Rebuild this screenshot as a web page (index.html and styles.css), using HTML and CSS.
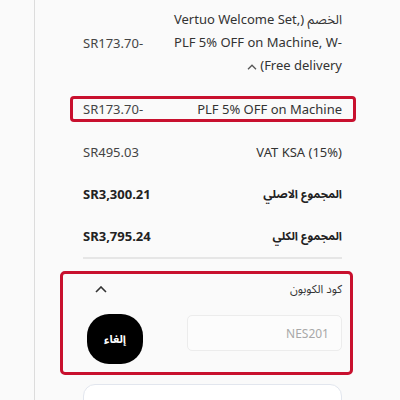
FILE: index.html
```html
<!DOCTYPE html>
<html lang="ar">

<head>
    <meta charset="UTF-8">
    <meta name="viewport" content="width=device-width, initial-scale=1.0">
    <title>ملخص الطلب</title>
    <link rel="stylesheet" href="styles.css">
</head>

<body>
    <div class="page">
        <div class="rail"></div>
        <div class="summary">
            <!-- الخصومات -->
            <div class="row row-first">
                <span class="amount">SR173.70-</span>
                <span class="label label-wrap" dir="rtl">الخصم (Vertuo Welcome Set, PLF 5% OFF on Machine, W-Free delivery)<svg class="mini-chevron" width="10" height="6" viewBox="0 0 10 6"><path d="M1 5.2 L5 1.2 L9 5.2" fill="none" stroke="#555" stroke-width="1.3"/></svg></span>
            </div>
            <div class="row row-marked">
                <div class="mark">
                    <span class="amount">SR173.70-</span>
                    <span class="label">PLF 5% OFF on Machine</span>
                </div>
            </div>
            <div class="row">
                <span class="amount">SR495.03</span>
                <span class="label">VAT KSA (15%)</span>
            </div>
            <div class="row row-bold">
                <span class="amount">SR3,300.21</span>
                <span class="label ar" dir="rtl">المجموع الاصلي</span>
            </div>
            <div class="row row-bold row-last">
                <span class="amount">SR3,795.24</span>
                <span class="label ar" dir="rtl">المجموع الكلي</span>
            </div>

            <!-- كود الكوبون -->
            <div class="coupon">
                <div class="coupon-head">
                    <svg class="chevron" width="12" height="7" viewBox="0 0 12 7"><path d="M1 6 L6 1 L11 6" fill="none" stroke="#333" stroke-width="1.6"/></svg>
                    <span class="coupon-title ar" dir="rtl">كود الكوبون</span>
                </div>
                <div class="coupon-body">
                    <button class="cancel-btn ar" dir="rtl">إلغاء</button>
                    <input class="coupon-input" type="text" value="NES201" readonly>
                </div>
            </div>

            <div class="next-box"></div>
        </div>
    </div>
</body>

</html>
```

FILE: styles.css
```css
* {
    margin: 0;
    padding: 0;
    box-sizing: border-box;
}

body {
    background-color: #fafafa;
    font-family: "Noto Sans", "Open Sans", "Noto Sans Arabic", "DejaVu Sans", sans-serif;
    font-size: 13px;
    color: #333;
}

.ar {
    font-size: 11.5px;
}

.page {
    display: flex;
    min-height: 100vh;
}

.rail {
    width: 35px;
    border-right: 1px solid #dcdcdc;
}

.summary {
    width: 259px;
    margin-left: 48px;
}

.row {
    display: flex;
    justify-content: space-between;
    align-items: center;
    padding: 10px 0;
    line-height: 22px;
}

.row-first {
    padding-top: 8px;
}

.label {
    text-align: right;
}

.label-wrap {
    width: 186px;
    line-height: 23px;
}

.amount {
    color: #444;
    white-space: nowrap;
}

.mini-chevron {
    margin: 0 3px 0 1px;
}

.row-marked {
    padding: 9px 0;
}

.mark {
    flex: 1;
    display: flex;
    justify-content: space-between;
    margin: 0 -14px 0 -13px;
    padding: 0 11px 0 10px;
    border: 3px solid #c8102e;
    border-radius: 4px;
    line-height: 20px;
}

.row-bold {
    font-weight: bold;
    color: #222;
}

.row-bold .amount {
    color: #222;
}

.row-last {
    border-bottom: 2px solid #e6e6e6;
}

.coupon {
    margin: 12px -11px 0 -23px;
    padding: 4px 8px 8px 24px;
    border: 3px solid #c8102e;
    border-radius: 5px;
}

.coupon-head {
    display: flex;
    justify-content: space-between;
    align-items: center;
    height: 22px;
}

.chevron {
    margin-left: 8px;
}

.coupon-title {
    color: #333;
}

.coupon-body {
    display: flex;
    justify-content: space-between;
    align-items: flex-start;
    margin-top: 14px;
}

.cancel-btn {
    width: 56px;
    height: 50px;
    border: none;
    border-radius: 22px;
    background: #000;
    color: #fff;
    font-family: inherit;
    font-weight: bold;
}

.coupon-input {
    width: 155px;
    height: 36px;
    margin-top: 1px;
    padding: 0 12px;
    border: 1px solid #ececec;
    border-radius: 5px;
    background: #fcfcfc;
    font-family: inherit;
    font-size: 12px;
    color: #a8a8a8;
    text-align: right;
    outline: none;
}

.next-box {
    height: 60px;
    margin-top: 9px;
    border: 1.5px solid #e2e6ee;
    border-radius: 12px;
    background: #fff;
}
```
